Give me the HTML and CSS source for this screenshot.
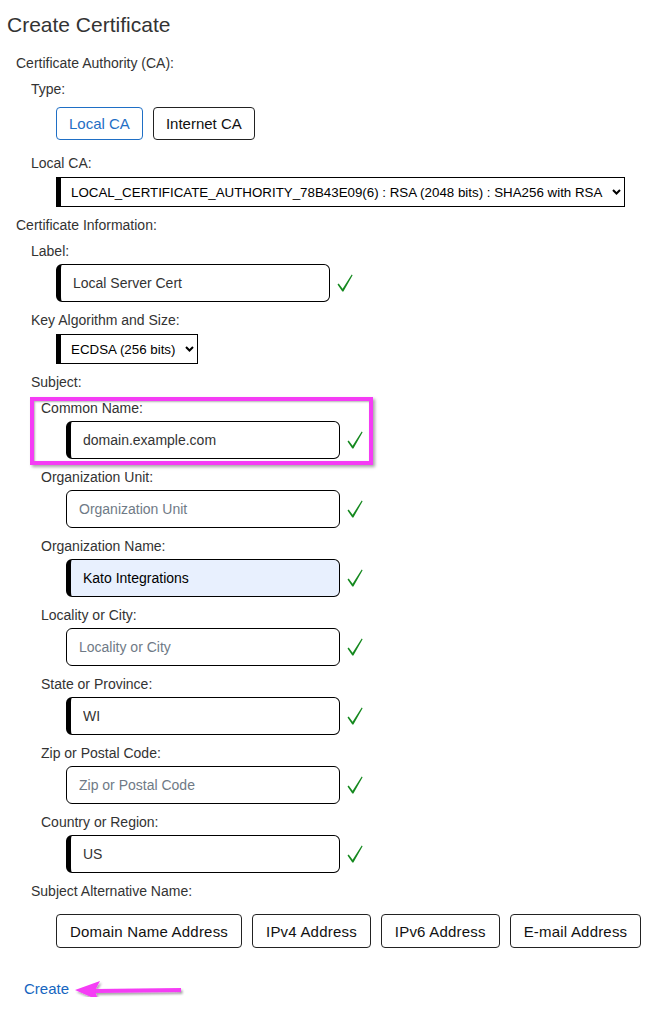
FILE: index.html
```html
<!DOCTYPE html>
<html lang="en">
<head>
    <meta charset="UTF-8">
    <meta name="viewport" content="width=device-width, initial-scale=1.0">
    <title>Create Certificate</title>
    <link rel="stylesheet" href="styles.css">
</head>
<body>
    <h1 class="page-title">Create Certificate</h1>

    <form class="cert-form">
        <!-- CA -->
        <div class="group-title">Certificate Authority (CA):</div>
        <div class="field">
            <div class="field-label">Type:</div>
            <div class="btn-row btn-row-type">
                <button type="button" class="btn btn-active">Local CA</button>
                <button type="button" class="btn">Internet CA</button>
            </div>
        </div>
        <div class="field">
            <div class="field-label">Local CA:</div>
            <div class="control">
                <div class="select-box select-wide">
                    <select class="select">
                        <option>LOCAL_CERTIFICATE_AUTHORITY_78B43E09(6) : RSA (2048 bits) : SHA256 with RSA</option>
                    </select>
                    <svg class="chevron" width="9" height="6" viewBox="0 0 9 6"><path d="M1 1 L4.5 4.5 L8 1" fill="none" stroke="#000" stroke-width="2"/></svg>
                </div>
            </div>
        </div>

        <!-- Certificate info -->
        <div class="group-title">Certificate Information:</div>
        <div class="field">
            <div class="field-label">Label:</div>
            <div class="control">
                <input class="text-input has-value" type="text" value="Local Server Cert">
                <svg class="check" width="16" height="18" viewBox="0 0 16 18"><path d="M0.5 10.4 L1.7 9.5 L5.6 14.8 L14.7 0.5 L15.6 1.2 L6.4 17.5 L5.3 17.5 Z"/></svg>
            </div>
        </div>
        <div class="field">
            <div class="field-label">Key Algorithm and Size:</div>
            <div class="control">
                <div class="select-box select-narrow">
                    <select class="select">
                        <option>ECDSA (256 bits)</option>
                    </select>
                    <svg class="chevron" width="9" height="6" viewBox="0 0 9 6"><path d="M1 1 L4.5 4.5 L8 1" fill="none" stroke="#000" stroke-width="2"/></svg>
                </div>
            </div>
        </div>

        <div class="field">
            <div class="field-label">Subject:</div>
            <div class="subject">
                <div class="sub-field highlight">
                    <div class="field-label">Common Name:</div>
                    <div class="control">
                        <input class="text-input has-value" type="text" value="domain.example.com">
                        <svg class="check" width="16" height="18" viewBox="0 0 16 18"><path d="M0.5 10.4 L1.7 9.5 L5.6 14.8 L14.7 0.5 L15.6 1.2 L6.4 17.5 L5.3 17.5 Z"/></svg>
                    </div>
                </div>
                <div class="sub-field">
                    <div class="field-label">Organization Unit:</div>
                    <div class="control">
                        <input class="text-input" type="text" placeholder="Organization Unit">
                        <svg class="check" width="16" height="18" viewBox="0 0 16 18"><path d="M0.5 10.4 L1.7 9.5 L5.6 14.8 L14.7 0.5 L15.6 1.2 L6.4 17.5 L5.3 17.5 Z"/></svg>
                    </div>
                </div>
                <div class="sub-field">
                    <div class="field-label">Organization Name:</div>
                    <div class="control">
                        <input class="text-input has-value autofilled" type="text" value="Kato Integrations">
                        <svg class="check" width="16" height="18" viewBox="0 0 16 18"><path d="M0.5 10.4 L1.7 9.5 L5.6 14.8 L14.7 0.5 L15.6 1.2 L6.4 17.5 L5.3 17.5 Z"/></svg>
                    </div>
                </div>
                <div class="sub-field">
                    <div class="field-label">Locality or City:</div>
                    <div class="control">
                        <input class="text-input" type="text" placeholder="Locality or City">
                        <svg class="check" width="16" height="18" viewBox="0 0 16 18"><path d="M0.5 10.4 L1.7 9.5 L5.6 14.8 L14.7 0.5 L15.6 1.2 L6.4 17.5 L5.3 17.5 Z"/></svg>
                    </div>
                </div>
                <div class="sub-field">
                    <div class="field-label">State or Province:</div>
                    <div class="control">
                        <input class="text-input has-value" type="text" value="WI">
                        <svg class="check" width="16" height="18" viewBox="0 0 16 18"><path d="M0.5 10.4 L1.7 9.5 L5.6 14.8 L14.7 0.5 L15.6 1.2 L6.4 17.5 L5.3 17.5 Z"/></svg>
                    </div>
                </div>
                <div class="sub-field">
                    <div class="field-label">Zip or Postal Code:</div>
                    <div class="control">
                        <input class="text-input" type="text" placeholder="Zip or Postal Code">
                        <svg class="check" width="16" height="18" viewBox="0 0 16 18"><path d="M0.5 10.4 L1.7 9.5 L5.6 14.8 L14.7 0.5 L15.6 1.2 L6.4 17.5 L5.3 17.5 Z"/></svg>
                    </div>
                </div>
                <div class="sub-field">
                    <div class="field-label">Country or Region:</div>
                    <div class="control">
                        <input class="text-input has-value" type="text" value="US">
                        <svg class="check" width="16" height="18" viewBox="0 0 16 18"><path d="M0.5 10.4 L1.7 9.5 L5.6 14.8 L14.7 0.5 L15.6 1.2 L6.4 17.5 L5.3 17.5 Z"/></svg>
                    </div>
                </div>
            </div>
        </div>

        <div class="field field-san">
            <div class="field-label">Subject Alternative Name:</div>
            <div class="btn-row btn-row-san">
                <button type="button" class="btn">Domain Name Address</button>
                <button type="button" class="btn">IPv4 Address</button>
                <button type="button" class="btn">IPv6 Address</button>
                <button type="button" class="btn">E-mail Address</button>
            </div>
        </div>

        <div class="create-row">
            <a href="#" class="create-link">Create</a>
            <!-- annotation arrow -->
            <svg class="arrow" width="112" height="28" viewBox="0 0 112 28">
                <defs>
                    <filter id="shadow" x="-10%" y="-30%" width="130%" height="180%">
                        <feDropShadow dx="1.5" dy="2" stdDeviation="1" flood-color="#000" flood-opacity="0.35"/>
                    </filter>
                </defs>
                <g filter="url(#shadow)" fill="#f53cf5">
                    <path d="M22 14 L108 13 L108 17 L22 18 Z"/>
                    <path d="M2 15 L27 6 L22 15.5 L25 25 Z"/>
                </g>
            </svg>
        </div>
    </form>
</body>
</html>
```

FILE: styles.css
```css
body {
    margin: 0;
    background-color: #fff;
    color: #333;
    font-family: "Liberation Sans", Arial, sans-serif;
    font-size: 14px;
}

.page-title {
    margin: 13px 0 0 7px;
    font-size: 21px;
    line-height: 24px;
    font-weight: normal;
    color: #333;
}

.cert-form {
    margin-top: 18px;
    padding-left: 16px;
}

.group-title {
    line-height: 16px;
    margin-bottom: 10px;
}

.field {
    margin-left: 15px;
    margin-bottom: 10px;
}

.sub-field {
    margin-bottom: 10px;
}

.field-label {
    line-height: 16px;
    margin-bottom: 5px;
}

.control {
    display: flex;
    align-items: center;
    padding-left: 25px;
}

/* buttons */
.btn-row {
    display: flex;
    gap: 10px;
    padding: 5px 0 5px 25px;
}

.btn-row-san {
    padding: 10px 0 0 25px;
}

.btn {
    height: 33px;
    padding: 0 13px;
    background-color: #fff;
    border: 1px solid #222;
    border-radius: 4px;
    font-family: "Liberation Sans", Arial, sans-serif;
    font-size: 15px;
    letter-spacing: 0.2px;
    color: #111;
}

.btn-row-type .btn {
    padding: 0 12px;
    letter-spacing: 0;
}

.btn-row-san .btn {
    height: 34px;
}

.btn-active {
    border-color: #1f6fc5;
    color: #1f6fc5;
}

/* selects */
.select-box {
    position: relative;
    margin-top: 1px;
}

.select-wide {
    width: 569px;
}

.select-narrow {
    width: 142px;
}

.select {
    appearance: none;
    -webkit-appearance: none;
    display: block;
    width: 100%;
    height: 30px;
    padding: 0 20px 0 10px;
    background-color: #fff;
    border: 1px solid #000;
    border-left: 5px solid #000;
    border-radius: 0;
    font-family: "Liberation Sans", Arial, sans-serif;
    font-size: 13.33px;
    color: #000;
}

.chevron {
    position: absolute;
    right: 4px;
    top: 12px;
    pointer-events: none;
}

/* text inputs */
.text-input {
    box-sizing: border-box;
    width: 274px;
    height: 38px;
    padding: 0 12px;
    background-color: #fff;
    border: 1px solid #000;
    border-radius: 6px;
    font-family: "Liberation Sans", Arial, sans-serif;
    font-size: 14px;
    color: #333;
}

.text-input::placeholder {
    color: #6f7a86;
}

.has-value {
    border-left: 5px solid #000;
}

.autofilled {
    background-color: #e8f0fe;
    color: #000;
}

.check {
    margin-left: 7px;
    fill: #15891f;
}

/* subject */
.subject {
    padding: 5px 0 0 10px;
}

.highlight {
    position: relative;
}

.highlight::before {
    content: "";
    position: absolute;
    left: -11px;
    top: -3px;
    width: 343px;
    height: 68px;
    box-sizing: border-box;
    border: 4px solid #f53cf5;
    box-shadow: 2px 2px 3px rgba(0, 0, 0, 0.35), inset 1px 1px 2px rgba(0, 0, 0, 0.3);
    pointer-events: none;
}

/* create */
.create-row {
    display: flex;
    align-items: center;
    margin-top: 33px;
    padding-left: 8px;
}

.create-link {
    font-size: 15px;
    line-height: 16px;
    color: #1565c0;
    text-decoration: none;
}

.arrow {
    margin: -6px 0 -6px 4px;
}
```
